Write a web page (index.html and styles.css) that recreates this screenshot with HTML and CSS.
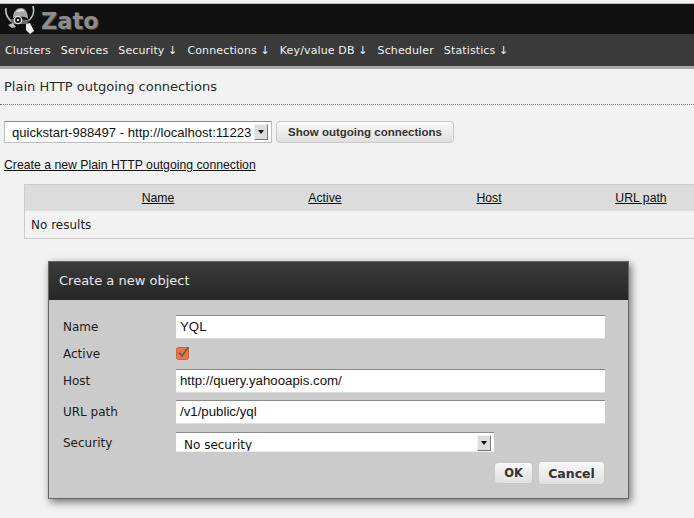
FILE: index.html
```html
<!DOCTYPE html>
<html lang="en">
<head>
<meta charset="utf-8">
<title>Zato</title>
<link rel="stylesheet" href="styles.css">
</head>
<body>
<header class="brand">
  <svg class="logo" width="32" height="30" viewBox="0 0 32 30" aria-hidden="true">
    <path d="M1 3 C0 9 3 15 9 18" fill="none" stroke="#c4c4c4" stroke-width="1.600"/>
    <path d="M28 1 C30 8 27 14 21 17" fill="none" stroke="#c4c4c4" stroke-width="1.600"/>
    <path d="M8 13 C8 6 12 3 16 3 C20 3 23 7 23 14 C19 11 13 11 8 13 Z" fill="#a6a6a6"/>
    <path d="M11 7 C13 4 17 3 20 6 C17 6 14 7 11 7 Z" fill="#e6e6e6"/>
    <path d="M5 14 L24 15 L22 19 L7 19 Z" fill="#6c6c6c"/>
    <path d="M3 20 L8 18 L11 22 L7 23 Z" fill="#bdbdbd"/>
    <path d="M21 19 L25 18 L29 26 L25 29 L21 25 Z" fill="#eeeeee"/>
    <circle cx="13" cy="15" r="3.600" fill="#111" stroke="#e2e2e2" stroke-width="1.400"/>
    <circle cx="13" cy="15" r="1.200" fill="#e2e2e2"/>
  </svg>
  <span class="wordmark">Zato</span>
</header>
<nav class="nav">
  <a>Clusters</a><a>Services</a><a>Security ↓</a><a>Connections ↓</a><a>Key/value DB ↓</a><a>Scheduler</a><a>Statistics ↓</a>
</nav>
<main>
  <h1 class="title">Plain HTTP outgoing connections</h1>
  <div class="toolbar">
    <div class="select select-cluster">
      <span>quickstart-988497 - http://localhost:11223</span>
      <i class="arrow"></i>
    </div>
    <button class="btn btn-show" type="button">Show outgoing connections</button>
  </div>
  <p class="create"><a>Create a new Plain HTTP outgoing connection</a></p>
  <div class="table-wrap">
    <div class="thead">
      <a>Name</a><a>Active</a><a>Host</a><a>URL path</a>
    </div>
    <div class="tbody">No results</div>
  </div>
</main>
<section class="modal">
  <h2 class="modal-title">Create a new object</h2>
  <form class="form">
    <div class="row row-name"><label>Name</label><div class="input">YQL</div></div>
    <div class="row row-active"><label>Active</label>
      <svg class="check" width="14" height="14" viewBox="0 0 14 14" aria-hidden="true">
        <rect x="0.500" y="1.500" width="12" height="12" rx="2" fill="#e9764a" stroke="#c9643e"/>
        <path d="M3 6.500 L6 10 L12.500 1" fill="none" stroke="#6b5a50" stroke-width="1.600"/>
      </svg>
    </div>
    <div class="row row-host"><label>Host</label><div class="input">http://query.yahooapis.com/</div></div>
    <div class="row row-url"><label>URL path</label><div class="input">/v1/public/yql</div></div>
    <div class="row row-security"><label>Security</label>
      <div class="select select-security"><span>No security</span><i class="arrow"></i></div>
    </div>
    <div class="actions">
      <button class="btn btn-ok" type="button">OK</button>
      <button class="btn btn-cancel" type="button">Cancel</button>
    </div>
  </form>
</section>
</body>
</html>
```
FILE: styles.css
```css
* { box-sizing: border-box; }
html, body { margin: 0; padding: 0; }
body {
  width: 694px;
  height: 518px;
  overflow: hidden;
  background: #f2f2f2;
  color: #1a1a1a;
  font-family: "DejaVu Sans", sans-serif;
  position: relative;
  padding-top: 3px;
}
.brand {
  height: 31px;
  background: #111;
  border-top: 1px solid #bbb;
  display: flex;
  align-items: center;
  padding-left: 5px;
}
.logo { display: block; margin-top: 1px; }
.wordmark {
  font: bold 22.500px "DejaVu Sans", sans-serif;
  color: #8d8d8d;
  text-shadow: 1px 1px 0 #4a3f38;
  margin-left: 4px;
  margin-top: 3px;
}
.nav {
  height: 35px;
  background: #3a3a3a;
  border-bottom: 3px solid #a8a8a8;
  display: flex;
  align-items: center;
  gap: 10px;
  padding: 0 5px;
  font-size: 11px;
  letter-spacing: .13px;
  color: #f0f0f0;
}
.title {
  margin: 0;
  height: 36px;
  padding: 10px 4px 0;
  font-size: 13px;
  font-weight: normal;
  line-height: 16px;
  color: #2a2a2a;
  border-bottom: 1px dotted #777;
}
.toolbar {
  display: flex;
  gap: 4px;
  margin: 16px 0 0 4px;
}
.select {
  background: #fff;
  display: flex;
  align-items: center;
  justify-content: space-between;
  overflow: hidden;
  white-space: nowrap;
}
.select-cluster {
  width: 268px;
  height: 22px;
  border: 1px solid #bdbdbd;
  border-top-color: #8a8a8a;
  padding: 0 3px 0 7px;
  font: 13.100px "Liberation Sans", sans-serif;
  color: #111;
}
.arrow {
  flex: none;
  width: 14px;
  height: 16px;
  background: #ddd;
  border: 1px solid;
  border-color: #f4f4f4 #777 #777 #f4f4f4;
  position: relative;
}
.arrow::after {
  content: "";
  position: absolute;
  left: 3px;
  top: 5px;
  border: 3.500px solid transparent;
  border-top: 4px solid #111;
  border-bottom: 0;
}
.btn {
  font-family: "Liberation Sans", sans-serif;
  font-weight: bold;
  color: #333;
  border: 1px solid #c8c8c8;
  border-radius: 4px;
  background: linear-gradient(#fbfbfb, #dedede);
  padding: 0;
}
.btn-show { width: 178px; height: 22px; font-size: 11.500px; }
.create {
  margin: 14px 0 0 4px;
  font: 12.250px/16px "Liberation Sans", sans-serif;
  color: #111;
}
.create a, .thead a { text-decoration: underline; }
.table-wrap {
  margin: 11px 0 0 24px;
  width: 680px;
  border: 1px solid #ccc;
  border-right: 0;
}
.thead {
  height: 26px;
  background: #dcdcdc;
  display: grid;
  grid-template-columns: 266px 68px 260px 44px 1fr;
  align-items: center;
  justify-items: center;
  font: 12.250px "Liberation Sans", sans-serif;
  color: #111;
  white-space: nowrap;
}
.tbody {
  height: 27px;
  padding-left: 6px;
  font-size: 12px;
  line-height: 28px;
  color: #222;
}
.modal {
  position: absolute;
  left: 48px;
  top: 261px;
  width: 581px;
  height: 238px;
  background: #cbcbcb;
  border: 1px solid #666;
  box-shadow: 2px 3px 8px rgba(0, 0, 0, .55);
}
.modal-title {
  margin: 0;
  height: 38px;
  background: linear-gradient(#3b3b3b, #262626);
  color: #e8e8e8;
  font-size: 13px;
  font-weight: normal;
  line-height: 37px;
  padding-left: 10px;
}
.form { padding: 15px 23px 0 14px; }
.row {
  display: flex;
  font-size: 12px;
  color: #1c1c1c;
}
.row label { width: 113px; flex: none; }
.row-name, .row-host, .row-url { height: 24px; align-items: center; }
.row-active { height: 30px; padding-top: 8px; }
.row-url { margin-top: 7px; }
.row-security { margin-top: 8px; height: 20px; }
.row-security label { padding-top: 4px; }
.input {
  flex: 1;
  height: 24px;
  background: #fff;
  border-top: 1px solid #8a8a8a;
  border-bottom: 1px solid #ddd;
  padding-left: 4px;
  font: 13.250px/22px "Liberation Sans", sans-serif;
  color: #111;
}
.check { margin-top: -1px; }
.select-security {
  width: 318px;
  height: 20px;
  border-top: 1px solid #8a8a8a;
  border-bottom: 1px solid #eee;
  padding: 0 3px 0 8px;
  font-size: 12px;
  color: #111;
  align-items: flex-start;
}
.select-security span { margin-top: 2px; line-height: 20px; height: 16px; overflow: hidden; }
.select-security .arrow { margin-top: 2px; }
.actions {
  display: flex;
  justify-content: flex-end;
  align-items: center;
  gap: 5px;
  margin-top: 9px;
}
.actions .btn { font: bold 11.500px "DejaVu Sans", sans-serif; background: linear-gradient(#f8f8f8, #e0e0e0); }
.btn-ok { width: 39px; height: 22px; }
.actions .btn-cancel { width: 67px; height: 24px; font-size: 12.500px; }
```
